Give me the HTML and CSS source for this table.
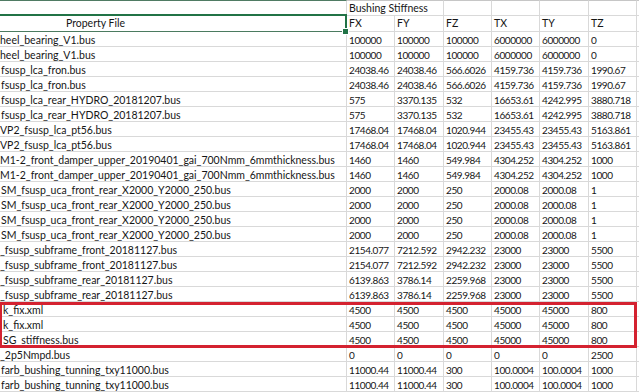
FILE: index.html
```html
<!DOCTYPE html>
<html lang="en">
<head>
  <meta charset="UTF-8">
  <title>Bushing Stiffness</title>
  <link rel="stylesheet" href="styles.css">
</head>
<body>
  <div class="sheet">
    <div class="row title">
      <div class="cell a"></div>
      <div class="cell span2">Bushing Stiffness</div>
      <div class="cell"></div><div class="cell"></div><div class="cell"></div><div class="cell"></div><div class="cell"></div>
    </div>
    <div class="row head">
      <div class="cell a">Property File<div class="sel"><span class="handle"></span></div></div>
      <div class="cell">FX</div><div class="cell">FY</div><div class="cell">FZ</div>
      <div class="cell">TX</div><div class="cell">TY</div><div class="cell">TZ</div><div class="cell"></div>
    </div>

    <div class="row"><div class="cell a">heel_bearing_V1.bus</div><div class="cell">100000</div><div class="cell">100000</div><div class="cell">100000</div><div class="cell">6000000</div><div class="cell">6000000</div><div class="cell">0</div><div class="cell"></div></div>
    <div class="row"><div class="cell a">heel_bearing_V1.bus</div><div class="cell">100000</div><div class="cell">100000</div><div class="cell">100000</div><div class="cell">6000000</div><div class="cell">6000000</div><div class="cell">0</div><div class="cell"></div></div>
    <div class="row"><div class="cell a ind1">fsusp_lca_fron.bus</div><div class="cell">24038.46</div><div class="cell">24038.46</div><div class="cell">566.6026</div><div class="cell">4159.736</div><div class="cell">4159.736</div><div class="cell">1990.67</div><div class="cell"></div></div>
    <div class="row"><div class="cell a ind1">fsusp_lca_fron.bus</div><div class="cell">24038.46</div><div class="cell">24038.46</div><div class="cell">566.6026</div><div class="cell">4159.736</div><div class="cell">4159.736</div><div class="cell">1990.67</div><div class="cell"></div></div>
    <div class="row"><div class="cell a ind1">fsusp_lca_rear_HYDRO_20181207.bus</div><div class="cell">575</div><div class="cell">3370.135</div><div class="cell">532</div><div class="cell">16653.61</div><div class="cell">4242.995</div><div class="cell">3880.718</div><div class="cell"></div></div>
    <div class="row"><div class="cell a ind1">fsusp_lca_rear_HYDRO_20181207.bus</div><div class="cell">575</div><div class="cell">3370.135</div><div class="cell">532</div><div class="cell">16653.61</div><div class="cell">4242.995</div><div class="cell">3880.718</div><div class="cell"></div></div>
    <div class="row"><div class="cell a">VP2_fsusp_lca_pt56.bus</div><div class="cell">17468.04</div><div class="cell">17468.04</div><div class="cell">1020.944</div><div class="cell">23455.43</div><div class="cell">23455.43</div><div class="cell">5163.861</div><div class="cell"></div></div>
    <div class="row"><div class="cell a">VP2_fsusp_lca_pt56.bus</div><div class="cell">17468.04</div><div class="cell">17468.04</div><div class="cell">1020.944</div><div class="cell">23455.43</div><div class="cell">23455.43</div><div class="cell">5163.861</div><div class="cell"></div></div>
    <div class="row"><div class="cell a">M1-2_front_damper_upper_20190401_gai_700Nmm_6mmthickness.bus</div><div class="cell">1460</div><div class="cell">1460</div><div class="cell">549.984</div><div class="cell">4304.252</div><div class="cell">4304.252</div><div class="cell">1000</div><div class="cell"></div></div>
    <div class="row"><div class="cell a">M1-2_front_damper_upper_20190401_gai_700Nmm_6mmthickness.bus</div><div class="cell">1460</div><div class="cell">1460</div><div class="cell">549.984</div><div class="cell">4304.252</div><div class="cell">4304.252</div><div class="cell">1000</div><div class="cell"></div></div>
    <div class="row"><div class="cell a ind1">SM_fsusp_uca_front_rear_X2000_Y2000_250.bus</div><div class="cell">2000</div><div class="cell">2000</div><div class="cell">250</div><div class="cell">2000.08</div><div class="cell">2000.08</div><div class="cell">1</div><div class="cell"></div></div>
    <div class="row"><div class="cell a ind1">SM_fsusp_uca_front_rear_X2000_Y2000_250.bus</div><div class="cell">2000</div><div class="cell">2000</div><div class="cell">250</div><div class="cell">2000.08</div><div class="cell">2000.08</div><div class="cell">1</div><div class="cell"></div></div>
    <div class="row"><div class="cell a ind1">SM_fsusp_uca_front_rear_X2000_Y2000_250.bus</div><div class="cell">2000</div><div class="cell">2000</div><div class="cell">250</div><div class="cell">2000.08</div><div class="cell">2000.08</div><div class="cell">1</div><div class="cell"></div></div>
    <div class="row"><div class="cell a ind1">SM_fsusp_uca_front_rear_X2000_Y2000_250.bus</div><div class="cell">2000</div><div class="cell">2000</div><div class="cell">250</div><div class="cell">2000.08</div><div class="cell">2000.08</div><div class="cell">1</div><div class="cell"></div></div>
    <div class="row"><div class="cell a">_fsusp_subframe_front_20181127.bus</div><div class="cell">2154.077</div><div class="cell">7212.592</div><div class="cell">2942.232</div><div class="cell">23000</div><div class="cell">23000</div><div class="cell">5500</div><div class="cell"></div></div>
    <div class="row"><div class="cell a">_fsusp_subframe_front_20181127.bus</div><div class="cell">2154.077</div><div class="cell">7212.592</div><div class="cell">2942.232</div><div class="cell">23000</div><div class="cell">23000</div><div class="cell">5500</div><div class="cell"></div></div>
    <div class="row"><div class="cell a">_fsusp_subframe_rear_20181127.bus</div><div class="cell">6139.863</div><div class="cell">3786.14</div><div class="cell">2259.968</div><div class="cell">23000</div><div class="cell">23000</div><div class="cell">5500</div><div class="cell"></div></div>
    <div class="row"><div class="cell a">_fsusp_subframe_rear_20181127.bus</div><div class="cell">6139.863</div><div class="cell">3786.14</div><div class="cell">2259.968</div><div class="cell">23000</div><div class="cell">23000</div><div class="cell">5500</div><div class="cell"></div></div>
    <div class="row"><div class="cell a ind3">k_fix.xml</div><div class="cell">4500</div><div class="cell">4500</div><div class="cell">4500</div><div class="cell">45000</div><div class="cell">45000</div><div class="cell">800</div><div class="cell"></div></div>
    <div class="row"><div class="cell a ind3">k_fix.xml</div><div class="cell">4500</div><div class="cell">4500</div><div class="cell">4500</div><div class="cell">45000</div><div class="cell">45000</div><div class="cell">800</div><div class="cell"></div></div>
    <div class="row"><div class="cell a ind3">SG_stiffness.bus</div><div class="cell">4500</div><div class="cell">4500</div><div class="cell">4500</div><div class="cell">45000</div><div class="cell">45000</div><div class="cell">800</div><div class="cell"></div></div>
    <div class="row"><div class="cell a">_2p5Nmpd.bus</div><div class="cell">0</div><div class="cell">0</div><div class="cell">0</div><div class="cell">0</div><div class="cell">0</div><div class="cell">2500</div><div class="cell"></div></div>
    <div class="row"><div class="cell a ind1">farb_bushing_tunning_txy11000.bus</div><div class="cell">11000.44</div><div class="cell">11000.44</div><div class="cell">300</div><div class="cell">100.0004</div><div class="cell">100.0004</div><div class="cell">1000</div><div class="cell"></div></div>
    <div class="row"><div class="cell a ind1">farb_bushing_tunning_txy11000.bus</div><div class="cell">11000.44</div><div class="cell">11000.44</div><div class="cell">300</div><div class="cell">100.0004</div><div class="cell">100.0004</div><div class="cell">1000</div><div class="cell"></div></div>

    <div class="mark"></div>
  </div>
</body>
</html>
```

FILE: styles.css
```css
body {
  margin: 0;
  background: #fff;
  overflow: hidden;
}
.sheet {
  position: relative;
  display: flex;
  flex-direction: column;
  width: 639px;
  height: 392px;
  overflow: hidden;
  font-family: Lato, "Liberation Sans", sans-serif;
  font-size: 10px;
  letter-spacing: -0.4px;
  color: #161616;
}
.row {
  display: grid;
  grid-template-columns: 347px 48px 49px 48px 48px 49px 48px 2px;
  height: 15px;
  flex: none;
}
.cell {
  box-sizing: border-box;
  border-right: 1px solid #d9d9d9;
  border-bottom: 1px solid #d9d9d9;
  padding: 1px 0 0 2px;
  line-height: 14px;
  white-space: nowrap;
  overflow: hidden;
}
.cell.a {
  padding-left: 0;
  font-size: 10.5px;
  letter-spacing: 0;
}
.cell.ind1 { padding-left: 1px; }
.cell.ind3 { padding-left: 3px; }
.span2 {
  grid-column: span 2;
  font-size: 10.5px;
  letter-spacing: 0;
}
.title {
  height: 16px;
}
.title .cell {
  border-top: 1px solid #c6c6c6;
  padding-top: 0;
}
.title .cell.a {
  border-top-color: #4f7b63;
}
.head {
  height: 16px;
}
.head .cell {
  padding-top: 0;
  line-height: 15px;
  font-size: 10.5px;
  letter-spacing: 0;
}
.head .cell.a {
  position: relative;
  overflow: visible;
  text-align: center;
  padding-right: 155px;
}
.sel {
  position: absolute;
  top: -2px;
  left: -4px;
  width: 351px;
  height: 18px;
  box-sizing: border-box;
  border: 2px solid #217346;
  border-bottom-width: 1px;
  border-bottom-color: #4b7b60;
}
.handle {
  position: absolute;
  right: -4px;
  bottom: -4px;
  width: 5px;
  height: 5px;
  background: #217346;
  border: 1px solid #fff;
}
.mark {
  position: absolute;
  top: 302px;
  left: -1px;
  width: 638px;
  height: 46px;
  box-sizing: border-box;
  border: 3px solid #d42230;
}
```
